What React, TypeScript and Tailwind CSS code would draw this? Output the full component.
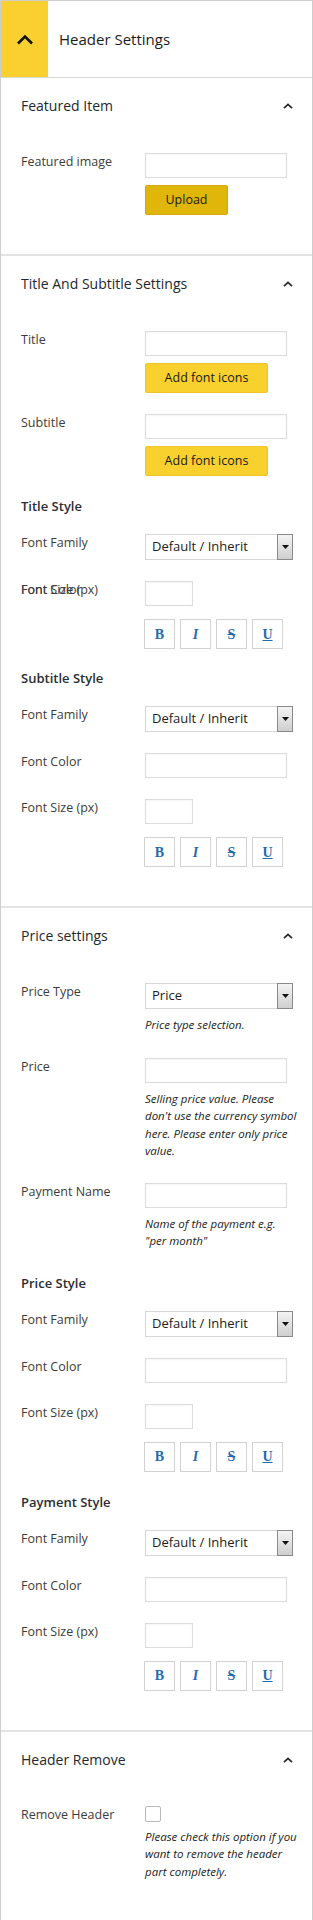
import type { ReactNode } from 'react'

const labelCls = "text-[12.5px] leading-[18px] text-[#3c3c3c]"

function Chevron({ big = false }: { big?: boolean }) {
  if (big) {
    return (
      <svg width="18" height="11" viewBox="0 0 18 11" fill="none">
        <path d="M2 9.5L9 2.5L16 9.5" stroke="#111" strokeWidth="2.6" />
      </svg>
    )
  }
  return (
    <svg width="10" height="6" viewBox="0 0 10 6" fill="none">
      <path d="M1 5.2L5 1.4L9 5.2" stroke="#23282d" strokeWidth="1.7" />
    </svg>
  )
}

function Section({ title, children, last = false }: { title: string; children: ReactNode; last?: boolean }) {
  return (
    <section className={last ? "pb-[40px]" : "border-b-2 border-[#e3e3e3] pb-[39px]"}>
      <div className="flex items-center justify-between pl-[20px] pr-[19px] pt-[18px]">
        <h2 className="text-[14px] leading-[20px] text-[#23282d]">{title}</h2>
        <Chevron />
      </div>
      <div className="flex flex-col pl-[20px]">{children}</div>
    </section>
  )
}

function Row({ label, children, className = "" }: { label: ReactNode; children: ReactNode; className?: string }) {
  return (
    <div className={"grid grid-cols-[124px_1fr] " + className}>
      <div className={labelCls}>{label}</div>
      <div className="flex flex-col items-start">{children}</div>
    </div>
  )
}

function TextInput({ small = false }: { small?: boolean }) {
  return (
    <div
      className={
        "h-[25px] border border-[#dcdcdc] bg-white shadow-[inset_0_1px_2px_rgba(0,0,0,0.04)] " +
        (small ? "w-[48px]" : "w-[142px]")
      }
    />
  )
}

function SelectBox({ value }: { value: string }) {
  return (
    <div className="flex h-[26px] w-[148px] border border-[#d6d6d6] bg-white">
      <div className="flex flex-1 items-center pl-[6px] text-[13px] text-[#222]">{value}</div>
      <div className="flex w-[16px] items-center justify-center border border-[#8a8a8a] bg-gradient-to-b from-[#f4f4f4] to-[#cfcfcf] -my-px -mr-px">
        <svg width="7" height="4" viewBox="0 0 7 4">
          <path d="M0 0H7L3.5 4Z" fill="#111" />
        </svg>
      </div>
    </div>
  )
}

function YellowButton({ children, dark = false }: { children: ReactNode; dark?: boolean }) {
  return (
    <button
      className={
        "mt-[7px] h-[30px] rounded-[2px] text-[12.5px] text-[#1a1a1a] " +
        (dark
          ? "w-[83px] border border-[#d5a80a] bg-[#e0b60b]"
          : "w-[123px] border border-[#eec428] bg-[#f9d12f]")
      }
    >
      {children}
    </button>
  )
}

function Help({ children }: { children: ReactNode }) {
  return (
    <p className="mt-[7px] w-[152px] text-[11.5px] leading-[17.5px] italic text-[#222]">{children}</p>
  )
}

function SubHeading({ children, className = "" }: { children: ReactNode; className?: string }) {
  return (
    <h3 className={"text-[13px] leading-[20px] font-semibold text-[#2a2e33] " + className}>{children}</h3>
  )
}

function Formats({ className = "" }: { className?: string }) {
  const btn =
    "flex h-[30px] w-[31px] items-center justify-center border border-[#d2d2d2] bg-white font-['Liberation_Serif',serif] text-[14px] font-bold text-[#1f6cb0]"
  return (
    <div className={"ml-[123px] flex gap-[5px] " + className}>
      <span className={btn}>B</span>
      <span className={btn + " italic"}>I</span>
      <span className={btn + " line-through"}>S</span>
      <span className={btn + " underline"}>U</span>
    </div>
  )
}

function StyleBlock({ title, headMt, overlap = false }: { title: string; headMt: string; overlap?: boolean }) {
  return (
    <>
      <SubHeading className={headMt}>{title}</SubHeading>
      <Row label="Font Family" className="mt-[18px]">
        <SelectBox value="Default / Inherit" />
      </Row>
      {overlap ? (
        <Row
          className="mt-[21px]"
          label={
            <div className="grid">
              <span className="col-start-1 row-start-1">Font Color</span>
              <span className="col-start-1 row-start-1">Font Size (px)</span>
            </div>
          }
        >
          <TextInput small />
        </Row>
      ) : (
        <>
          <Row label="Font Color" className="mt-[21px]">
            <TextInput />
          </Row>
          <Row label="Font Size (px)" className="mt-[21px]">
            <TextInput small />
          </Row>
        </>
      )}
      <Formats className="mt-[13px]" />
    </>
  )
}

export default function App() {
  return (
    <div className="min-h-[1920px] w-[313px] border-x border-t border-[#cdcdcd] bg-white font-['Open_Sans','Noto_Sans',sans-serif]">
      <header className="flex h-[77px] items-center border-b border-[#d9d9d9]">
        <div className="flex h-full w-[47px] items-center justify-center bg-[#f9d02f]">
          <Chevron big />
        </div>
        <h1 className="ml-[11px] text-[15px] text-[#1d1d1d]">Header Settings</h1>
      </header>

      <Section title="Featured Item">
        <Row label="Featured image" className="mt-[37px]">
          <TextInput />
          <YellowButton dark>Upload</YellowButton>
        </Row>
      </Section>

      <Section title="Title And Subtitle Settings">
        <Row label="Title" className="mt-[37px]">
          <TextInput />
          <YellowButton>Add font icons</YellowButton>
        </Row>
        <Row label="Subtitle" className="mt-[21px]">
          <TextInput />
          <YellowButton>Add font icons</YellowButton>
        </Row>
        <StyleBlock title="Title Style" headMt="mt-[20px]" overlap />
        <StyleBlock title="Subtitle Style" headMt="mt-[19px]" />
      </Section>

      <Section title="Price settings">
        <Row label="Price Type" className="mt-[37px]">
          <SelectBox value="Price" />
          <Help>Price type selection.</Help>
        </Row>
        <Row label="Price" className="mt-[24px]">
          <TextInput />
          <Help>Selling price value. Please don't use the currency symbol here. Please enter only price value.</Help>
        </Row>
        <Row label="Payment Name" className="mt-[23px]">
          <TextInput />
          <Help>Name of the payment e.g. "per month"</Help>
        </Row>
        <StyleBlock title="Price Style" headMt="mt-[23px]" />
        <StyleBlock title="Payment Style" headMt="mt-[20px]" />
      </Section>

      <Section title="Header Remove" last>
        <Row label="Remove Header" className="mt-[36px]">
          <div className="h-[16px] w-[16px] rounded-[2px] border border-[#b9b9b9] bg-white" />
          <p className="mt-[6px] w-[152px] text-[11.5px] leading-[17.5px] italic text-[#222]">
            Please check this option if you want to remove the header part completely.
          </p>
        </Row>
      </Section>
    </div>
  )
}
